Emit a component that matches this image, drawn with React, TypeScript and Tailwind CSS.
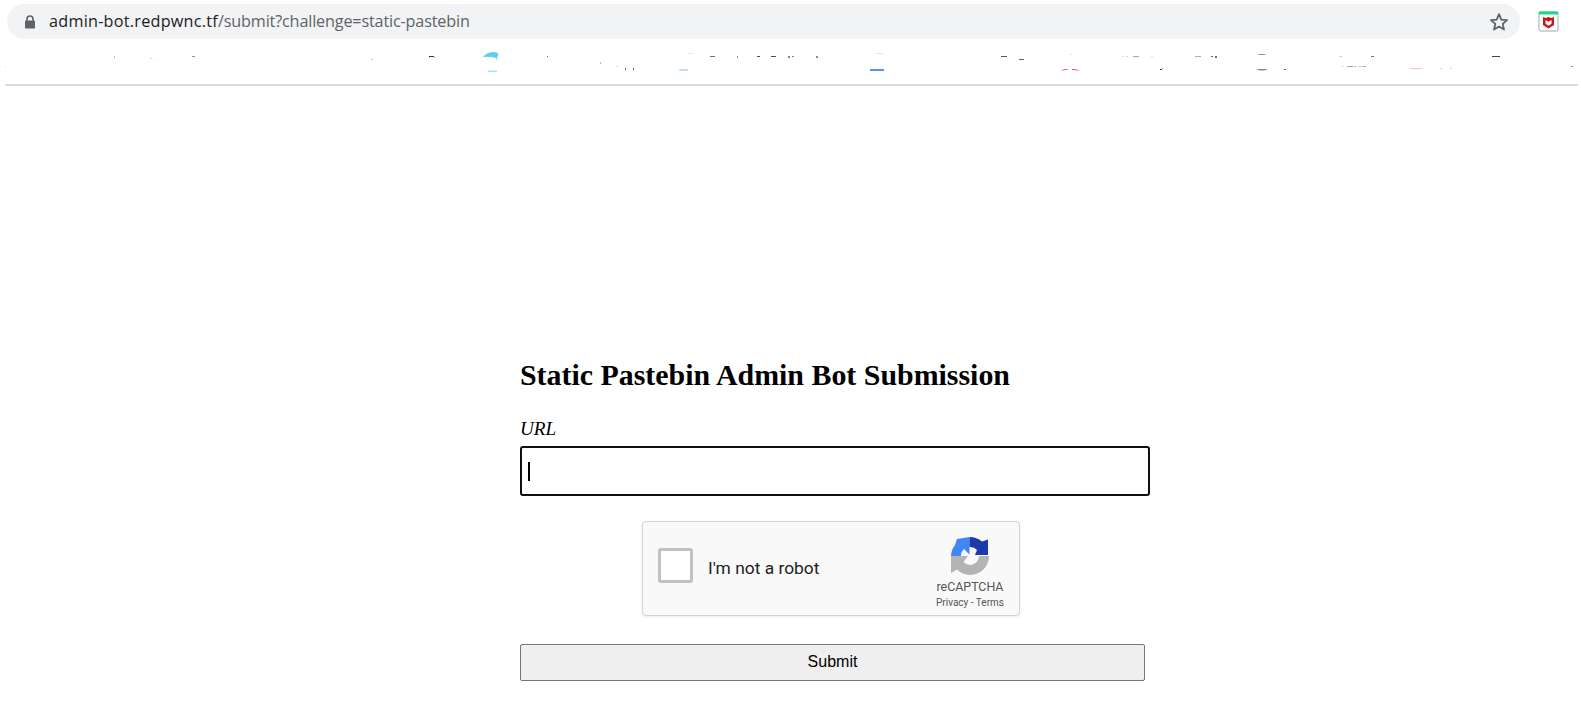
const marks: [number, number, number, number, string][] = [
  [5, 66, 1, 1, "#d8d8d8"],
  [114, 56, 1, 2, "#b8b8b8"],
  [150, 58, 2, 1, "#dcdcdc"],
  [154, 59, 1, 1, "#e6e6e6"],
  [158, 59, 1, 1, "#eeeeee"],
  [192, 56, 3, 1, "#7f93aa"],
  [371, 59, 2, 1, "#c4c4c4"],
  [429, 56, 5, 1, "#2d3440"],
  [429, 57, 1, 1, "#e8cfa8"],
  [434, 57, 1, 1, "#6cc1ec"],
  [547, 56, 1, 1, "#b5514a"],
  [600, 62, 1, 2, "#9cc3dc"],
  [616, 66, 2, 1, "#e2e2e2"],
  [625, 68, 1, 2, "#8a6a70"],
  [633, 68, 1, 2, "#4a5f9a"],
  [688, 53, 6, 1, "#dcefdc"],
  [710, 56, 5, 1, "#5f7688"],
  [737, 56, 1, 2, "#a8806a"],
  [757, 56, 3, 1, "#45505c"],
  [771, 56, 5, 1, "#4a5058"],
  [788, 56, 2, 2, "#8a7c80"],
  [792, 56, 2, 1, "#5f88b5"],
  [816, 56, 2, 2, "#a8805f"],
  [875, 53, 8, 1, "#e6e8e6"],
  [1001, 56, 6, 1, "#4f5a68"],
  [1019, 59, 5, 1, "#5a5f68"],
  [1070, 54, 2, 1, "#fbd5d0"],
  [1122, 56, 2, 1, "#eed8d0"],
  [1126, 56, 2, 1, "#d8d0d8"],
  [1133, 56, 6, 1, "#a8a0ac"],
  [1151, 56, 2, 1, "#e0dce0"],
  [1160, 69, 2, 1, "#4a4038"],
  [1162, 68, 1, 1, "#6cb0dc"],
  [1195, 56, 6, 1, "#a8b4bc"],
  [1211, 56, 2, 1, "#7f6a50"],
  [1215, 56, 2, 2, "#4a78b0"],
  [1227, 67, 1, 1, "#eeeeee"],
  [1284, 69, 2, 1, "#6a6a6a"],
  [1342, 66, 1, 1, "#c0c0c8"],
  [1347, 66, 6, 1, "#a8a49c"],
  [1354, 66, 2, 1, "#c0b090"],
  [1359, 66, 2, 1, "#b0c0d0"],
  [1362, 66, 4, 1, "#b8aca4"],
  [1339, 56, 3, 1, "#d0d0d0"],
  [1371, 56, 3, 1, "#6f7a70"],
  [1440, 68, 2, 1, "#f0ccd4"],
  [1450, 68, 2, 1, "#e4dcc8"],
  [1492, 56, 8, 1, "#3c4658"],
  [1571, 66, 2, 1, "#6c9cc8"],
];

export default function App() {
  return (
    <div className="h-[702px] w-[1581px] overflow-hidden bg-white">
      <header className="relative h-[86px] pl-[7px] pt-[4px]">
        <div className="flex h-[35px] w-[1513px] items-center rounded-full bg-[#f1f3f4] pl-[17px] pr-[11px]">
          <svg width="12" height="14" viewBox="0 0 12 14" className="shrink-0">
            <path d="M3 6V4a3 3 0 0 1 6 0v2" fill="none" stroke="#5f6368" strokeWidth="1.6" />
            <rect x="1" y="5.5" width="10" height="8" rx="1" fill="#5f6368" />
          </svg>
          <div className="ml-[13px] font-['Open_Sans',sans-serif] text-[16.200px] leading-none tracking-[0.25px] text-[#202124]">
            admin-bot.redpwnc.tf<span className="tracking-[-0.16px] text-[#5f6368]">/submit?challenge=static-pastebin</span>
          </div>
          <svg width="20" height="20" viewBox="0 0 20 20" className="ml-auto">
            <path d="M10 2.2l2.3 5.4 5.8.5-4.4 3.8 1.3 5.700-5-3-5 3 1.3-5.700L1.900 8.100l5.800-.5z" fill="none" stroke="#5f6368" strokeWidth="1.8" strokeLinejoin="round" />
          </svg>
        </div>
        <svg width="22" height="22" viewBox="0 0 22 22" className="absolute left-[1538px] top-[11px]">
          <rect x="1" y="1" width="19" height="19" rx="2" fill="#fff" stroke="#c4c4c4" strokeWidth="1.400" />
          <rect x="1" y="0.500" width="19" height="3" fill="#14dc84" />
          <path d="M5 6l2.700 1 2.800-1 2.800 1 2.700-1v8l-5.500 3.500-5.500-3.500z" fill="#c5161d" />
          <path d="M7.500 9v3.700l3 2 3-2V9l-3 1.800z" fill="#fff" />
        </svg>
        <svg width="1581" height="24" viewBox="0 50 1581 24" className="absolute left-0 top-[50px]">
          <path d="M483 57Q487 52 494 52Q498 52 498.500 55L497 57L497.500 62L496 58Q490 56 483 57Z" fill="#5bcdf5" />
          <rect x="488" y="70.500" width="9" height="1.500" fill="#a8e4f8" />
          <rect x="679" y="69" width="9" height="2" rx="1" fill="#bfe3bf" />
          <rect x="870" y="69" width="14" height="2" fill="#5b93e8" />
          <path d="M1060 71q3-2 7-2l1 1q-4-.500-8 1zM1072 69q5 0 8 2q-4-1-8-1z" fill="#e8453c" />
          <path d="M1257 55q5-2 10 0zM1256 69h12q-6 3-12 0z" fill="#80868b" />
          <path d="M1408 68h16q-8 3-16 0z" fill="#ffc9c9" />
          {marks.map(([x, y, w, h, c], i) => (
            <rect key={i} x={x} y={y} width={w} height={h} fill={c} />
          ))}
        </svg>
        <div className="absolute bottom-0 left-[5px] right-[3px] h-[2px] bg-[#dadce0]" />
      </header>
      <main className="ml-[520px] w-[630px] pt-[272px]">
        <h1 className="font-['Liberation_Serif',serif] text-[29.900px] font-bold leading-[33px] text-black">
          Static Pastebin Admin Bot Submission
        </h1>
        <div className="mt-[27px] font-['Liberation_Serif',serif] text-[19.200px] italic leading-[22px] text-black">URL</div>
        <div className="mt-[6px] flex h-[50px] w-[630px] items-center rounded-[3px] border-2 border-[#101010] pl-[6px]">
          <div className="h-[19px] w-[2px] bg-black" />
        </div>
        <div className="ml-[122px] mt-[25px] flex h-[95px] w-[378px] rounded-[4px] border border-[#d3d3d3] bg-[#f9f9f9] shadow-[0_1px_3px_rgba(0,0,0,0.08)]">
          <div className="ml-[15px] mt-[26px] h-[35px] w-[35px] rounded-[3px] border-[3px] border-[#c1c1c1] bg-white" />
          <div className="ml-[15px] mt-[36px] font-['Roboto',sans-serif] text-[17.400px] leading-[20px] text-[#222]">I&apos;m not a robot</div>
          <div className="ml-auto mr-[14px] flex w-[70px] flex-col items-center pt-[14px]">
            <svg width="40" height="40" viewBox="0 0 40 40">
              <path d="M39 20A19 19 0 0 1 20 39V29A9 9 0 0 0 29 20Z" fill="#b4b4b4" />
              <path d="M20 39A19 19 0 0 1 7 33.500L1 37V20H18L13.500 26A9 9 0 0 0 20 29Z" fill="#b4b4b4" />
              <path d="M1 20A19 19 0 0 1 5 9L7 3L19.500 1V18.500L14 13A9 9 0 0 0 11 20Z" fill="#4285f4" />
              <path d="M19.500 1A19 19 0 0 1 32 5.500L38 3.500V19H25L27 14A9 9 0 0 0 19.500 11Z" fill="#1c3aa9" />
            </svg>
            <div className="mt-[3px] font-['Roboto',sans-serif] text-[12.400px] leading-[16px] text-[#555]">reCAPTCHA</div>
            <div className="mt-[2px] whitespace-nowrap font-['Roboto',sans-serif] text-[10px] leading-[12px] text-[#555]">Privacy - Terms</div>
          </div>
        </div>
        <button className="mt-[28px] block h-[37px] w-[625px] rounded-[2px] border border-[#767676] bg-[#efefef] pb-[2px] font-['Liberation_Sans',sans-serif] text-[16px] text-black">
          Submit
        </button>
      </main>
    </div>
  );
}
